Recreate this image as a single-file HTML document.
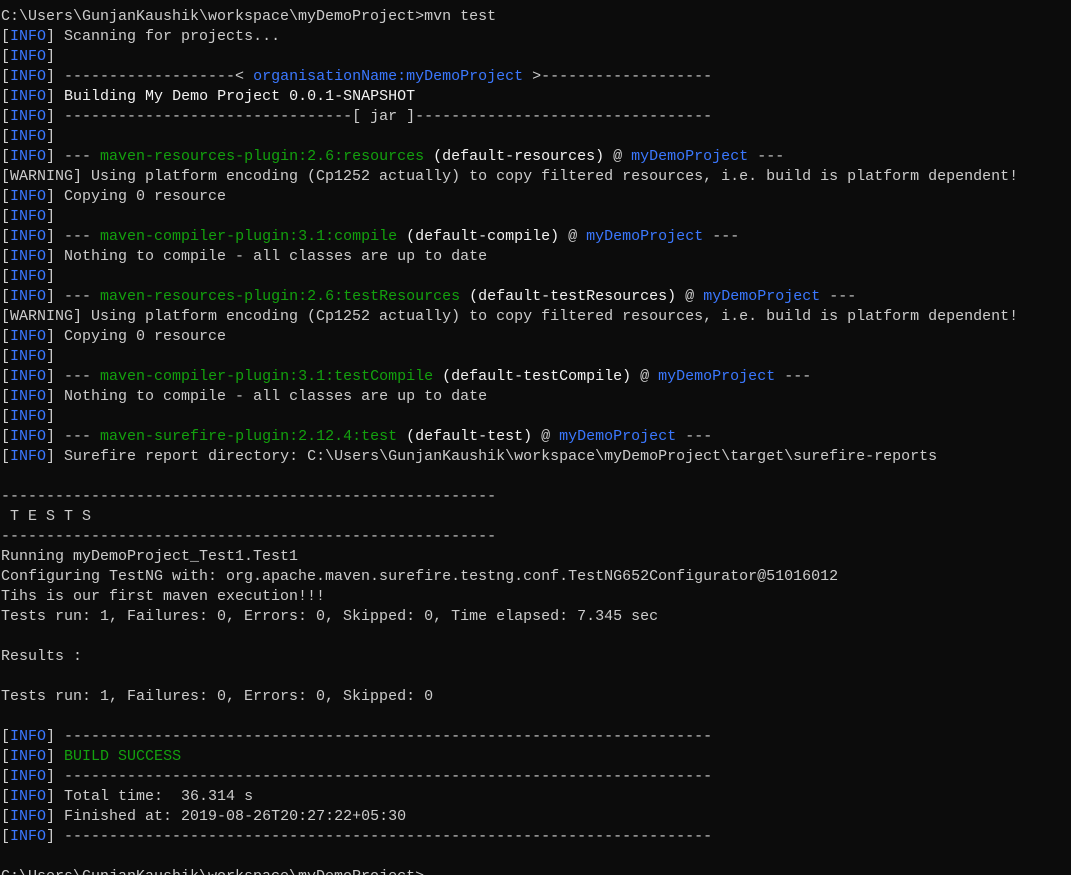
<!DOCTYPE html>
<html><head><meta charset="utf-8"><style>
html,body{margin:0;padding:0;background:#0c0c0c;width:1071px;height:875px;overflow:hidden}
pre{margin:0;padding:7px 0 0 1px;font-family:"Liberation Mono",monospace;font-size:15px;line-height:20px;color:#cccccc;white-space:pre}
.b{color:#3b78ff}.g{color:#13a10e}.w{color:#f2f2f2}
</style></head><body><pre>C:\Users\GunjanKaushik\workspace\myDemoProject&gt;mvn test
[<span class="b">INFO</span>] Scanning for projects...
[<span class="b">INFO</span>]
[<span class="b">INFO</span>] -------------------&lt; <span class="b">organisationName:myDemoProject</span> &gt;-------------------
[<span class="b">INFO</span>] <span class="w">Building My Demo Project 0.0.1-SNAPSHOT</span>
[<span class="b">INFO</span>] --------------------------------[ jar ]---------------------------------
[<span class="b">INFO</span>]
[<span class="b">INFO</span>] --- <span class="g">maven-resources-plugin:2.6:resources</span> <span class="w">(default-resources)</span> @ <span class="b">myDemoProject</span> ---
[WARNING] Using platform encoding (Cp1252 actually) to copy filtered resources, i.e. build is platform dependent!
[<span class="b">INFO</span>] Copying 0 resource
[<span class="b">INFO</span>]
[<span class="b">INFO</span>] --- <span class="g">maven-compiler-plugin:3.1:compile</span> <span class="w">(default-compile)</span> @ <span class="b">myDemoProject</span> ---
[<span class="b">INFO</span>] Nothing to compile - all classes are up to date
[<span class="b">INFO</span>]
[<span class="b">INFO</span>] --- <span class="g">maven-resources-plugin:2.6:testResources</span> <span class="w">(default-testResources)</span> @ <span class="b">myDemoProject</span> ---
[WARNING] Using platform encoding (Cp1252 actually) to copy filtered resources, i.e. build is platform dependent!
[<span class="b">INFO</span>] Copying 0 resource
[<span class="b">INFO</span>]
[<span class="b">INFO</span>] --- <span class="g">maven-compiler-plugin:3.1:testCompile</span> <span class="w">(default-testCompile)</span> @ <span class="b">myDemoProject</span> ---
[<span class="b">INFO</span>] Nothing to compile - all classes are up to date
[<span class="b">INFO</span>]
[<span class="b">INFO</span>] --- <span class="g">maven-surefire-plugin:2.12.4:test</span> <span class="w">(default-test)</span> @ <span class="b">myDemoProject</span> ---
[<span class="b">INFO</span>] Surefire report directory: C:\Users\GunjanKaushik\workspace\myDemoProject\target\surefire-reports

-------------------------------------------------------
 T E S T S
-------------------------------------------------------
Running myDemoProject_Test1.Test1
Configuring TestNG with: org.apache.maven.surefire.testng.conf.TestNG652Configurator@51016012
Tihs is our first maven execution!!!
Tests run: 1, Failures: 0, Errors: 0, Skipped: 0, Time elapsed: 7.345 sec

Results :

Tests run: 1, Failures: 0, Errors: 0, Skipped: 0

[<span class="b">INFO</span>] ------------------------------------------------------------------------
[<span class="b">INFO</span>] <span class="g">BUILD SUCCESS</span>
[<span class="b">INFO</span>] ------------------------------------------------------------------------
[<span class="b">INFO</span>] Total time:  36.314 s
[<span class="b">INFO</span>] Finished at: 2019-08-26T20:27:22+05:30
[<span class="b">INFO</span>] ------------------------------------------------------------------------

C:\Users\GunjanKaushik\workspace\myDemoProject&gt;
</pre></body></html>
